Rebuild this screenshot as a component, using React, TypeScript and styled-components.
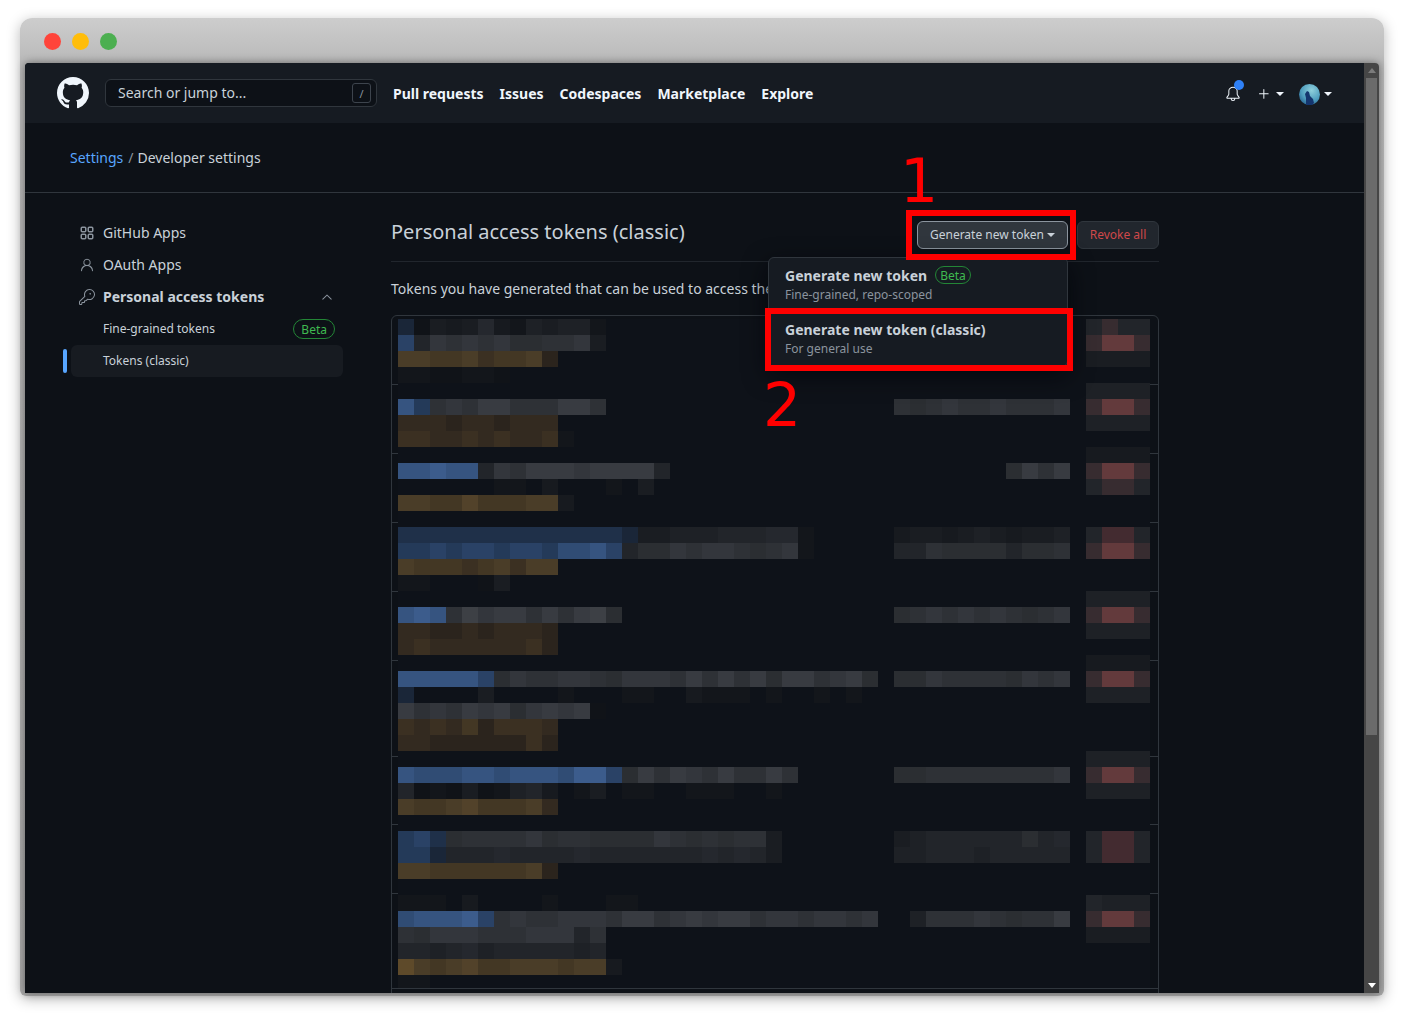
import React from "react";
import styled, { createGlobalStyle } from "styled-components";
import { GoBell, GoChevronUp, GoKey, GoPerson, GoPlus } from "react-icons/go";

const GlobalStyle = createGlobalStyle`
  html, body {
    margin: 0;
    height: 100%;
    overflow: hidden;
    background: #fff;
  }
  body {
    font-family: "Noto Sans", "Liberation Sans", sans-serif;
    font-size: 14px;
    color: #c9d1d9;
  }
  * {
    box-sizing: border-box;
  }
`;

const Stage = styled.div`
  padding: 18px 20px 0;
`;

const Window = styled.div`
  width: 1364px;
  height: 978px;
  display: flex;
  flex-direction: column;
  border-radius: 12px 12px 6px 6px;
  background: linear-gradient(180deg, #cdcdcd 0, #b9b9b9 45px, #a8a8a8 100%);
  box-shadow: 0 3px 14px rgba(0, 0, 0, 0.28);
`;

const TitleBar = styled.div`
  height: 45px;
  flex: none;
  display: flex;
  align-items: center;
  gap: 11px;
  padding: 2px 0 0 24px;
`;

const Light = styled.span<{ $color: string }>`
  width: 17px;
  height: 17px;
  border-radius: 50%;
  background: ${(p) => p.$color};
`;

const Viewport = styled.div`
  height: 930px;
  margin: 0 5px;
  display: flex;
  border-radius: 4px 4px 0 0;
  overflow: hidden;
  box-shadow: 0 0 9px rgba(0, 0, 0, 0.45);
`;

const Page = styled.div`
  flex: 1;
  min-width: 0;
  background: #0d1117;
  overflow: hidden;
`;

const ScrollTrack = styled.div`
  width: 15px;
  flex: none;
  display: flex;
  flex-direction: column;
  align-items: center;
  background: #464646;
`;

const ScrollArrow = styled.div<{ $down?: boolean }>`
  height: 15px;
  flex: none;
  display: flex;
  align-items: center;
  &::before {
    content: "";
    border-left: 4px solid transparent;
    border-right: 4px solid transparent;
    ${(p) =>
      p.$down
        ? "border-top: 5px solid #fff;"
        : "border-bottom: 5px solid #7c7c7c;"}
  }
`;

const ScrollThumb = styled.div`
  width: 11px;
  height: 657px;
  background: #6b6b6b;
`;

const ScrollRest = styled.div`
  flex: 1;
`;

const Header = styled.header`
  height: 60px;
  display: flex;
  align-items: center;
  padding: 0 32px;
  background: #161b22;
  color: #f0f6fc;
`;

const LogoMark = styled.svg`
  width: 32px;
  height: 32px;
  flex: none;
  margin-right: 16px;
  fill: #f0f6fc;
`;

const Search = styled.div`
  width: 272px;
  height: 28px;
  display: flex;
  align-items: center;
  justify-content: space-between;
  padding: 0 5px 0 12px;
  margin-right: 16px;
  background: #0d1117;
  border: 1px solid #30363d;
  border-radius: 6px;
  color: #c9d1d9;
`;

const SearchText = styled.span`
  margin-bottom: 2px;
`;

const SlashKey = styled.span`
  width: 19px;
  height: 20px;
  display: flex;
  align-items: center;
  justify-content: center;
  border: 1px solid #3d444d;
  border-radius: 3px;
  font-size: 11px;
  color: #8b949e;
`;

const Nav = styled.nav`
  display: flex;
  gap: 16px;
  font-weight: 700;
  color: #f0f6fc;
`;

const HeaderRight = styled.div`
  margin-left: auto;
  padding-top: 2px;
  display: flex;
  align-items: center;
`;

const BellWrap = styled.div`
  position: relative;
  display: flex;
  margin-right: 15px;
`;

const BellDot = styled.span`
  position: absolute;
  top: -6px;
  right: -3px;
  width: 10px;
  height: 10px;
  border-radius: 50%;
  background: #2f81f7;
`;

const Caret = styled.span`
  margin-left: 4px;
  border-left: 4px solid transparent;
  border-right: 4px solid transparent;
  border-top: 4px solid #f0f6fc;
`;

const HeaderGroup = styled.div<{ $mr?: number }>`
  display: flex;
  align-items: center;
  margin-right: ${(p) => p.$mr ?? 0}px;
`;

const Crumbs = styled.div`
  height: 70px;
  display: flex;
  align-items: center;
  padding: 0 45px 1px;
  border-bottom: 1px solid #30363d;
`;

const CrumbLink = styled.span`
  color: #58a6ff;
`;

const CrumbSep = styled.span`
  margin: 0 4px 0 5px;
  color: #8b949e;
`;

const Content = styled.div`
  display: flex;
  align-items: flex-start;
`;

const Sidebar = styled.aside`
  width: 272px;
  margin: 24px 48px 0 46px;
  flex: none;
`;

const SideItem = styled.div<{ $active?: boolean; $sub?: boolean; $bold?: boolean }>`
  position: relative;
  height: 32px;
  display: flex;
  align-items: center;
  padding: 0 8px ${(p) => (p.$sub ? "1px" : "2px")};
  border-radius: 6px;
  font-size: ${(p) => (p.$sub ? "12px" : "14px")};
  font-weight: ${(p) => (p.$bold ? 700 : 400)};
  background: ${(p) => (p.$active ? "#171b21" : "transparent")};
  ${(p) => (p.$sub ? "padding-left: 32px;" : "")}
`;

const SideMarker = styled.span`
  position: absolute;
  left: -8px;
  top: 4px;
  width: 4px;
  height: 24px;
  border-radius: 2px;
  background: #58a6ff;
`;

const SideIcon = styled.span`
  width: 16px;
  height: 16px;
  margin: 2px 8px 0 0;
  display: flex;
  color: #8b949e;
  svg {
    width: 16px;
    height: 16px;
  }
`;

const SideChevron = styled(GoChevronUp)`
  margin: 2px 0 0 auto;
  width: 16px;
  height: 16px;
  color: #8b949e;
`;

const Beta = styled.span<{ $push?: boolean }>`
  height: 20px;
  display: inline-flex;
  align-items: center;
  padding: 0 7px;
  border: 1px solid #238636;
  border-radius: 10px;
  font-size: 12px;
  font-weight: 400;
  color: #3fb950;
  ${(p) => (p.$push ? "margin: 1px 0 0 auto;" : "")}
`;

const Main = styled.main`
  width: 768px;
  flex: none;
  padding-top: 25px;
`;

const HeadRow = styled.div`
  height: 44px;
  display: flex;
  align-items: flex-start;
  border-bottom: 1px solid #21262d;
`;

const Title = styled.h2`
  margin: 0 auto 0 0;
  font-size: 20px;
  line-height: 28px;
  font-weight: 400;
  color: #c9d1d9;
`;

const ButtonGroup = styled.div`
  position: relative;
  width: 242px;
  margin-top: 3px;
  display: flex;
  justify-content: space-between;
`;

const Button = styled.button<{ $danger?: boolean }>`
  height: 28px;
  width: ${(p) => (p.$danger ? "82px" : "151px")};
  display: flex;
  align-items: center;
  justify-content: center;
  padding: 0 0 2px;
  border-radius: 6px;
  border: 1px solid ${(p) => (p.$danger ? "#30363d" : "#8b949e")};
  background: ${(p) => (p.$danger ? "#21262d" : "#30363d")};
  color: ${(p) => (p.$danger ? "#d0484a" : "#c9d1d9")};
  font: inherit;
  font-size: 12px;
`;

const ButtonCaret = styled.span`
  margin: 2px 0 0 3px;
  border-left: 4px solid transparent;
  border-right: 4px solid transparent;
  border-top: 4px solid #c9d1d9;
`;

const Menu = styled.div`
  position: absolute;
  z-index: 3;
  top: 36px;
  left: -149px;
  width: 300px;
  background: #161b22;
  border: 1px solid #30363d;
  border-radius: 6px;
  box-shadow: 0 8px 24px rgba(1, 4, 9, 0.75);
`;

const MenuItem = styled.div`
  position: relative;
  height: 54px;
  padding: 7px 16px;
`;

const MenuTitle = styled.div`
  height: 20px;
  display: flex;
  align-items: center;
  gap: 8px;
  font-weight: 700;
  color: #c9d1d9;
`;

const MenuBeta = styled(Beta)`
  height: 18px;
  padding: 0 4px;
`;

const MenuSub = styled.div`
  margin-top: 1px;
  font-size: 12px;
  line-height: 18px;
  color: #8b949e;
`;

const RedBox = styled.span<{ $t: number; $r: number; $b: number; $l: number }>`
  position: absolute;
  z-index: 4;
  top: ${(p) => p.$t}px;
  right: ${(p) => p.$r}px;
  bottom: ${(p) => p.$b}px;
  left: ${(p) => p.$l}px;
  border: 6px solid #f00;
  pointer-events: none;
`;

const RedNumber = styled.span<{ $t: number; $l: number }>`
  position: absolute;
  z-index: 4;
  top: ${(p) => p.$t}px;
  left: ${(p) => p.$l}px;
  font-family: "DejaVu Sans", sans-serif;
  font-size: 60px;
  line-height: 70px;
  color: #f00;
`;

const Intro = styled.p`
  margin: 16px 0;
  line-height: 21px;
  white-space: nowrap;
`;

const TokenList = styled.div`
  position: relative;
  border: 1px solid #30363d;
  border-radius: 6px;
`;

const TokenRow = styled.div<{ $h: number }>`
  height: ${(p) => p.$h}px;
  & + & {
    border-top: 1px solid #30363d;
  }
`;

const Mosaic = styled.svg`
  position: absolute;
  top: 3px;
  left: 6px;
  display: block;
`;

// blurred token rows are a 16px pixelated picture, colours by letter
const palette: Record<string, string> = {
  "0": "#101318",
  "1": "#13161b",
  "2": "#171a1f",
  "3": "#1a1d22",
  "4": "#1e2126",
  "5": "#22252a",
  "6": "#25282e",
  g: "#2b2e32",
  h: "#2e3136",
  i: "#33363c",
  j: "#383b41",
  k: "#3d4045",
  A: "#3c5c8c",
  B: "#365480",
  C: "#304c74",
  D: "#2a4266",
  E: "#243a59",
  F: "#1f3049",
  G: "#1a2638",
  l: "#5e4a2a",
  m: "#52422a",
  n: "#4a3d28",
  o: "#433724",
  p: "#3b3022",
  q: "#332a20",
  r: "#2b241d",
  R: "#633a3c",
  S: "#432b30",
  T: "#372c30"
};

type Segment = [number, string];

const pixels: Segment[][] = [
  [[0, "G032362143441"], [43, "5T55"]],
  [[0, "D5ihihigghhi3"], [43, "TRRT"]],
  [[0, "nnoonpoonr"], [43, "3333"]],
  [[0, "1100110"]],
  [[43, "4444"]],
  [[0, "BEhihjjhhhjjh"], [31, "hghihhihhhi"], [43, "TRRT"]],
  [[0, "qqqrqqrqqq"], [43, "4444"]],
  [[0, "ppqqpqpqqp"], [10, "1"]],
  [[43, "2222"]],
  [[0, "BBABB5ihjjjijjjj5"], [38, "gjhj"], [43, "TRRT"]],
  [[6, "11.2...1.3"], [43, "5TT5"]],
  [[0, "nnoomooonn"], [10, "2"]],
  [],
  [[0, "FFFFFFFFFFFFFF"], [14, "G3344455566"], [25, "1"], [31, "23323432334"], [43, "5SS5"]],
  [[0, "EEDEDDEDDECCBD"], [14, "5ggihiihghi"], [25, "1"], [31, "55hgggg5ggh"], [43, "TRRT"]],
  [[0, "noooponpnn"]],
  [[0, "11"], [5, "03"]],
  [[43, "4444"]],
  [[0, "BAB"], [3, "hkijjhjhjkg"], [31, "ghihihihghi"], [43, "TRRT"]],
  [[0, "qqrrqrqqqr"], [43, "4444"]],
  [[0, "qpqqqqqqpr"]],
  [[43, "2222"]],
  [[0, "BBBBBD"], [6, "gihhiihgiiihjhjhjgjjhijg"], [31, "ggihhhhgihi"], [43, "TRRT"]],
  [[0, "G"], [5, "3"], [10, "1"], [14, "11"], [18, "2111"], [23, "1"], [26, "1"], [28, "1"], [43, "4444"]],
  [[0, "jhihjijgijij"], [12, "0"]],
  [[0, "pqpqorpppq"]],
  [[0, "qqrrrrrrpr"]],
  [[43, "4444"]],
  [[0, "BCCCBBCBBBCAAD"], [14, "gjhjihjhhjh"], [31, "gghhhhhhhhi"], [43, "TRRT"]],
  [[0, "5010301452.13"], [14, "11"], [18, "111"], [23, "1"], [43, "4444"]],
  [[0, "noonmooonq"]],
  [],
  [[0, "EDF"], [3, "ghhhhighhggggihghghh"], [23, "3"], [31, "34555555g56"], [43, "5SS5"]],
  [[0, "EEG"], [3, "55565555655555556565"], [23, "3"], [31, "44555455555"], [43, "5SS5"]],
  [[0, "nnoooooon"], [9, "r"]],
  [],
  [[0, "111.2....1...11"], [43, "5444"]],
  [[0, "CBBBAD"], [6, "hihhiiihjjhijijjhiihiihi"], [32, "4hhhihghhj"], [43, "TRRT"]],
  [[0, "hgiiihhhiii5h"], [43, "3333"]],
  [[0, "5545645555545"]],
  [[0, "lnonmoonnnonn"], [13, "2"]],
  [[0, "11"]]
];

const tokenRows = [68, 69, 69, 69, 69, 96, 68, 69, 95, 60];

const PixelCells = () => (
  <Mosaic width={752} height={669}>
    <rect width={752} height={669} fill="#0e1219" />
    {pixels.map((line, y) =>
      line.map(([start, cells]) =>
        cells.split("").map((c, i) =>
          palette[c] ? (
            <rect
              key={`${y}-${start + i}`}
              x={(start + i) * 16}
              y={y * 16}
              width={16}
              height={16}
              fill={palette[c]}
            />
          ) : null
        )
      )
    )}
  </Mosaic>
);

const Logo = () => (
  <LogoMark viewBox="0 0 16 16">
    <path d="M8 0C3.58 0 0 3.58 0 8c0 3.54 2.29 6.53 5.47 7.59.4.07.55-.17.55-.38 0-.19-.01-.82-.01-1.49-2.01.37-2.53-.49-2.69-.94-.09-.23-.48-.94-.82-1.13-.28-.15-.68-.52-.01-.53.63-.01 1.08.58 1.23.82.72 1.21 1.87.87 2.33.66.07-.52.28-.87.51-1.07-1.78-.2-3.64-.89-3.64-3.95 0-.87.31-1.59.82-2.15-.08-.2-.36-1.02.08-2.12 0 0 .67-.21 2.2.82.64-.18 1.32-.27 2-.27.68 0 1.36.09 2 .27 1.53-1.04 2.2-.82 2.2-.82.44 1.1.16 1.92.08 2.12.51.56.82 1.27.82 2.15 0 3.07-1.87 3.75-3.65 3.95.29.25.54.73.54 1.48 0 1.07-.01 1.93-.01 2.2 0 .21.15.46.55.38A8.013 8.013 0 0016 8c0-4.42-3.58-8-8-8z" />
  </LogoMark>
);

const AppsIcon = () => (
  <svg viewBox="0 0 16 16" fill="none" stroke="currentColor" strokeWidth={1.5}>
    <rect x={2.25} y={2.25} width={4.5} height={4.5} rx={1} />
    <rect x={9.25} y={2.25} width={4.5} height={4.5} rx={1} />
    <rect x={2.25} y={9.25} width={4.5} height={4.5} rx={1} />
    <rect x={9.25} y={9.25} width={4.5} height={4.5} rx={1} />
  </svg>
);

const Avatar = () => (
  <svg width={21} height={21} viewBox="0 0 21 21">
    <defs>
      <radialGradient id="av" cx="60%" cy="30%" r="80%">
        <stop offset="0%" stopColor="#8fd0dc" />
        <stop offset="60%" stopColor="#4f9ebf" />
        <stop offset="100%" stopColor="#24608f" />
      </radialGradient>
    </defs>
    <circle cx={10.5} cy={10.5} r={10.5} fill="url(#av)" />
    <path d="M8 7l2 1 1 4 3 3 1 4-2 2H7l0-7-1-4z" fill="#14356e" />
  </svg>
);

const sideIcon = (icon: React.ReactNode) => <SideIcon>{icon}</SideIcon>;

export default function App() {
  return (
    <>
      <GlobalStyle />
      <Stage>
        <Window>
          <TitleBar>
            <Light $color="#ff443a" />
            <Light $color="#ffbd0a" />
            <Light $color="#4caf50" />
          </TitleBar>
          <Viewport>
            <Page>
              <Header>
                <Logo />
                <Search>
                  <SearchText>Search or jump to...</SearchText>
                  <SlashKey>/</SlashKey>
                </Search>
                <Nav>
                  <span>Pull requests</span>
                  <span>Issues</span>
                  <span>Codespaces</span>
                  <span>Marketplace</span>
                  <span>Explore</span>
                </Nav>
                <HeaderRight>
                  <BellWrap>
                    <GoBell size={16} />
                    <BellDot />
                  </BellWrap>
                  <HeaderGroup $mr={15}>
                    <GoPlus size={16} />
                    <Caret />
                  </HeaderGroup>
                  <HeaderGroup>
                    <Avatar />
                    <Caret />
                  </HeaderGroup>
                </HeaderRight>
              </Header>
              <Crumbs>
                <CrumbLink>Settings</CrumbLink>
                <CrumbSep>/</CrumbSep>
                Developer settings
              </Crumbs>
              <Content>
                <Sidebar>
                  <SideItem>
                    {sideIcon(<AppsIcon />)}
                    GitHub Apps
                  </SideItem>
                  <SideItem>
                    {sideIcon(<GoPerson />)}
                    OAuth Apps
                  </SideItem>
                  <SideItem $bold>
                    {sideIcon(<GoKey />)}
                    Personal access tokens
                    <SideChevron />
                  </SideItem>
                  <SideItem $sub>
                    Fine-grained tokens
                    <Beta $push>Beta</Beta>
                  </SideItem>
                  <SideItem $sub $active>
                    <SideMarker />
                    Tokens (classic)
                  </SideItem>
                </Sidebar>
                <Main>
                  <HeadRow>
                    <Title>Personal access tokens (classic)</Title>
                    <ButtonGroup>
                      <Button>
                        Generate new token
                        <ButtonCaret />
                      </Button>
                      <Button $danger>Revoke all</Button>
                      <RedBox $t={-11} $r={83} $b={-11} $l={-11} />
                      <RedNumber $t={-75} $l={-17}>1</RedNumber>
                      <Menu>
                        <MenuItem>
                          <MenuTitle>
                            Generate new token
                            <MenuBeta>Beta</MenuBeta>
                          </MenuTitle>
                          <MenuSub>Fine-grained, repo-scoped</MenuSub>
                        </MenuItem>
                        <MenuItem>
                          <MenuTitle>Generate new token (classic)</MenuTitle>
                          <MenuSub>For general use</MenuSub>
                          <RedBox $t={-4} $r={-6} $b={-5} $l={-4} />
                          <RedNumber $t={58} $l={-6}>2</RedNumber>
                        </MenuItem>
                      </Menu>
                    </ButtonGroup>
                  </HeadRow>
                  <Intro>
                    Tokens you have generated that can be used to access the
                  </Intro>
                  <TokenList>
                    {tokenRows.map((h, i) => (
                      <TokenRow key={i} $h={h} />
                    ))}
                    <PixelCells />
                  </TokenList>
                </Main>
              </Content>
            </Page>
            <ScrollTrack>
              <ScrollArrow />
              <ScrollThumb />
              <ScrollRest />
              <ScrollArrow $down />
            </ScrollTrack>
          </Viewport>
        </Window>
      </Stage>
    </>
  );
}
